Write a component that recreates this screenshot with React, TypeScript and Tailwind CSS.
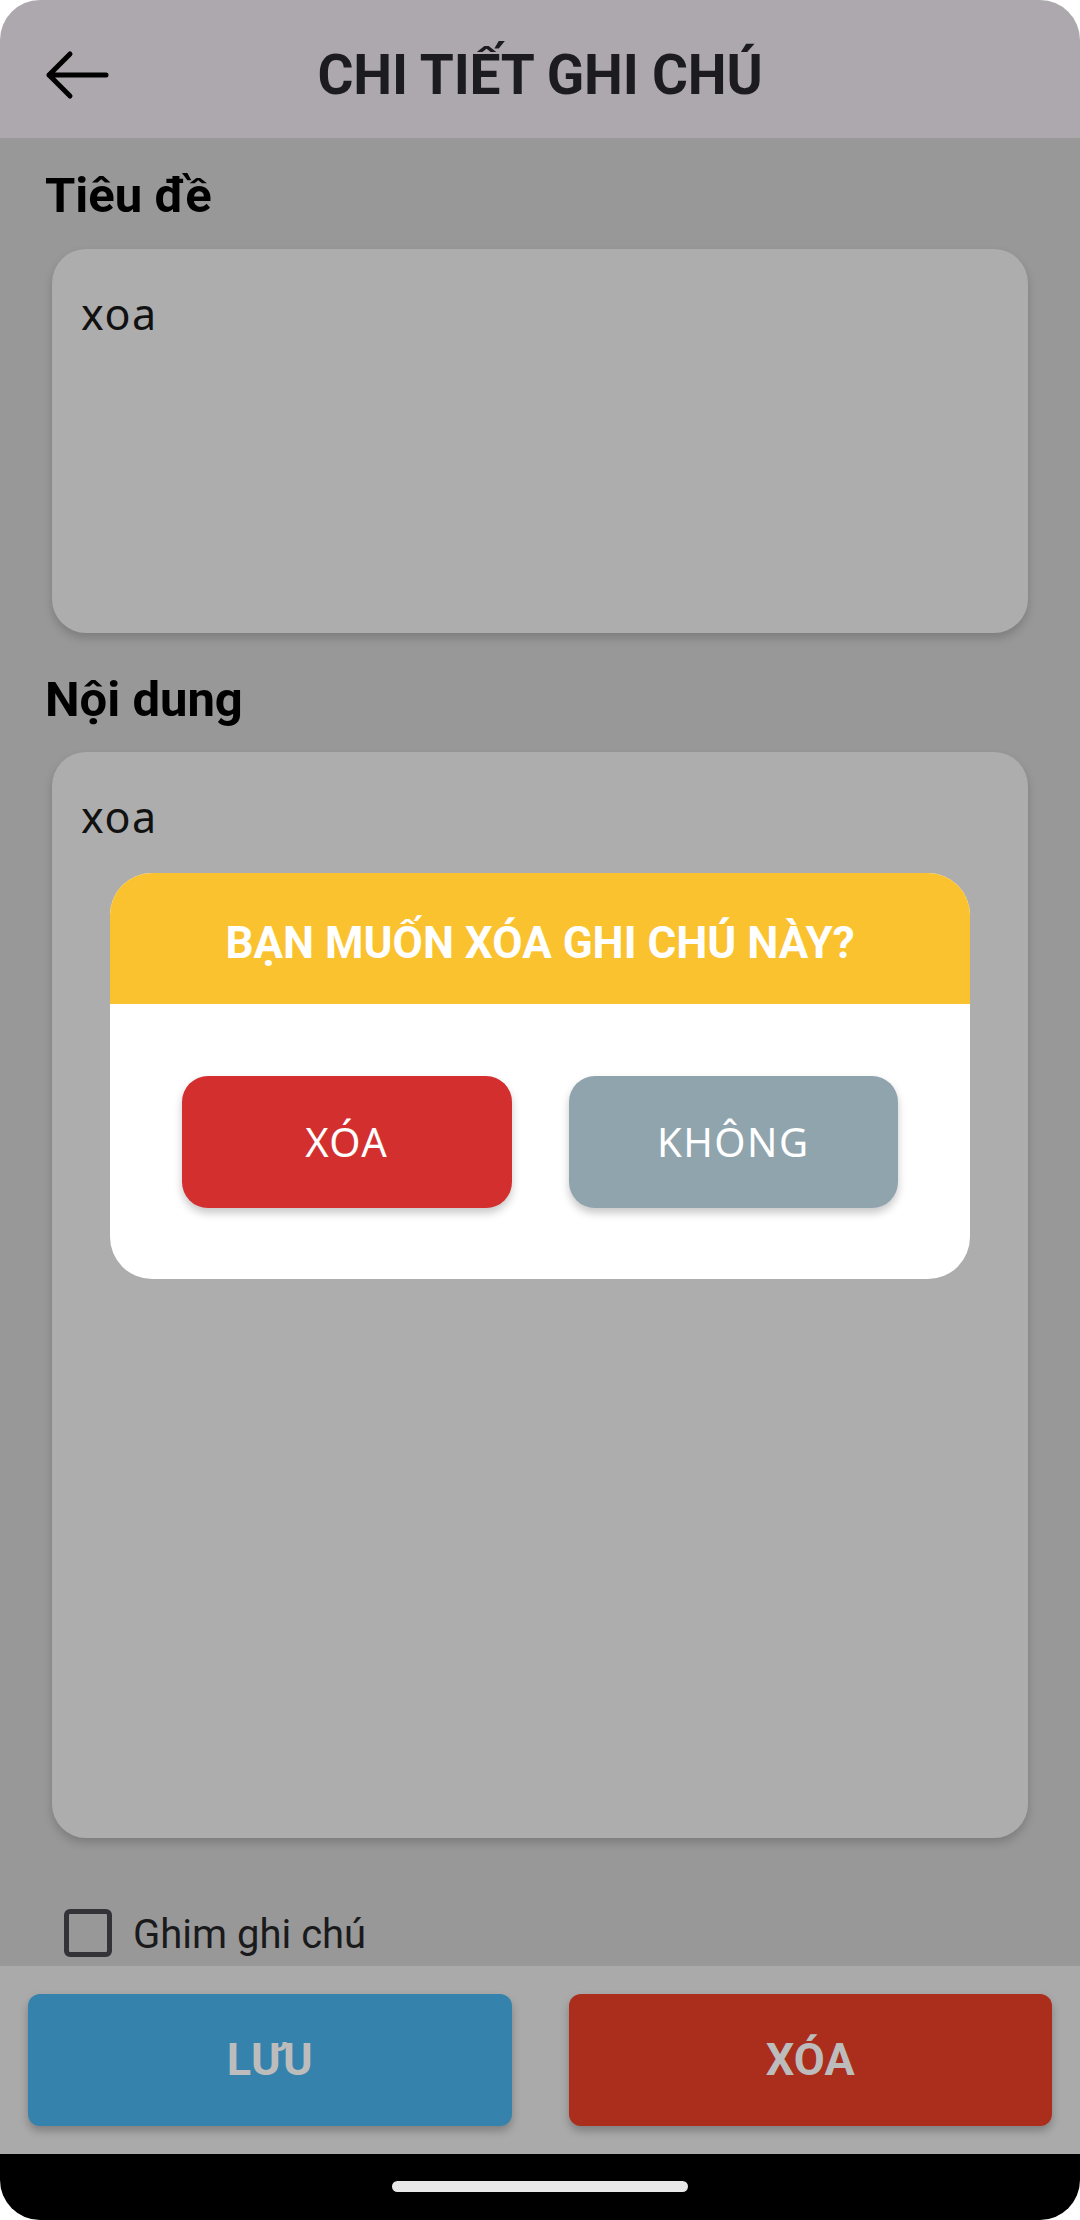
const roboto = { fontFamily: "Roboto, 'Noto Sans', sans-serif" };

function NoteField({ value, height }: { value: string; height: string }) {
  return (
    <div
      className={`mx-[7px] rounded-[34px] bg-[#adadad] pl-[29px] pt-[33px] shadow-[0_5px_10px_rgba(0,0,0,0.18)] ${height}`}
    >
      <div className="font-['Noto_Sans',sans-serif] text-[43px] leading-[63px] tracking-[1.5px] text-[#111]">{value}</div>
    </div>
  );
}

function BackArrow() {
  return (
    <svg className="absolute left-[40px] top-[45px] h-[60px] w-[72px]" viewBox="0 0 72 60" fill="none">
      <path
        d="M9 30 H66 M30 9 L9 30 L30 51"
        stroke="#000"
        strokeWidth="5"
        strokeLinecap="round"
        strokeLinejoin="round"
      />
    </svg>
  );
}

export default function App() {
  return (
    <div className="h-[2220px] w-[1080px] bg-white" style={roboto}>
      <div className="relative flex h-full flex-col overflow-hidden rounded-[40px]">
        {/* top bar */}
        <header className="relative flex h-[138px] shrink-0 items-center justify-center bg-[#ada8ad] pt-[12px]">
          <BackArrow />
          <h1 className="text-[55px] font-bold leading-none tracking-[-0.2px] text-[#1c1b1f]">CHI TIẾT GHI CHÚ</h1>
        </header>

        {/* form */}
        <main className="flex flex-1 flex-col bg-[#989898] px-[45px] pt-[30px] pb-[9px]">
          <label className="text-[49px] font-bold leading-[56px] text-black">Tiêu đề</label>
          <div className="mt-[25px]">
            <NoteField value="xoa" height="h-[384px]" />
          </div>
          <label className="mt-[39px] text-[49px] font-bold leading-[56px] text-black">Nội dung</label>
          <div className="mt-[24px]">
            <NoteField value="xoa" height="h-[1086px]" />
          </div>
          <div className="mt-auto flex items-center gap-[21px] pl-[19px]">
            <div className="h-[48px] w-[48px] rounded-[6px] border-[5px] border-[#333338]" />
            <span className="pt-[3px] text-[40px] leading-[44px] text-[#1a1a1c]">Ghim ghi chú</span>
          </div>
        </main>

        {/* bottom actions */}
        <footer className="flex h-[188px] shrink-0 gap-[57px] bg-[#aaaaaa] px-[28px] pt-[28px]">
          <button className="flex h-[132px] flex-1 items-center justify-center rounded-[12px] bg-[#3583ad] text-[45px] font-bold text-[#bcbcbc] shadow-[0_5px_8px_rgba(0,0,0,0.25)]">
            LƯU
          </button>
          <button className="flex h-[132px] flex-1 items-center justify-center rounded-[12px] bg-[#ab2d1c] text-[45px] font-bold text-[#bcbcbc] shadow-[0_5px_8px_rgba(0,0,0,0.25)]">
            XÓA
          </button>
        </footer>

        {/* system nav */}
        <div className="flex h-[66px] shrink-0 justify-center bg-black pt-[27px]">
          <div className="h-[11px] w-[296px] rounded-full bg-[#e8e8e8]" />
        </div>

        {/* confirm dialog */}
        <div className="absolute left-[110px] top-[873px] w-[860px] overflow-hidden rounded-[42px] bg-white">
          <div className="flex h-[131px] items-center justify-center bg-[#fbc22f] pt-[8px]">
            <h2 className="text-[44px] font-bold leading-none text-white">BẠN MUỐN XÓA GHI CHÚ NÀY?</h2>
          </div>
          <div className="flex gap-[57px] px-[72px] pt-[72px] pb-[71px]">
            <button className="flex h-[132px] flex-1 items-center justify-center rounded-[26px] bg-[#d32f2f] font-['Noto_Sans',sans-serif] text-[40px] tracking-[1.5px] text-white shadow-[0_5px_8px_rgba(0,0,0,0.22)]">
              XÓA
            </button>
            <button className="flex h-[132px] flex-1 items-center justify-center rounded-[26px] bg-[#90a4ae] font-['Noto_Sans',sans-serif] text-[40px] tracking-[1.5px] text-white shadow-[0_5px_8px_rgba(0,0,0,0.22)]">
              KHÔNG
            </button>
          </div>
        </div>
      </div>
    </div>
  );
}
